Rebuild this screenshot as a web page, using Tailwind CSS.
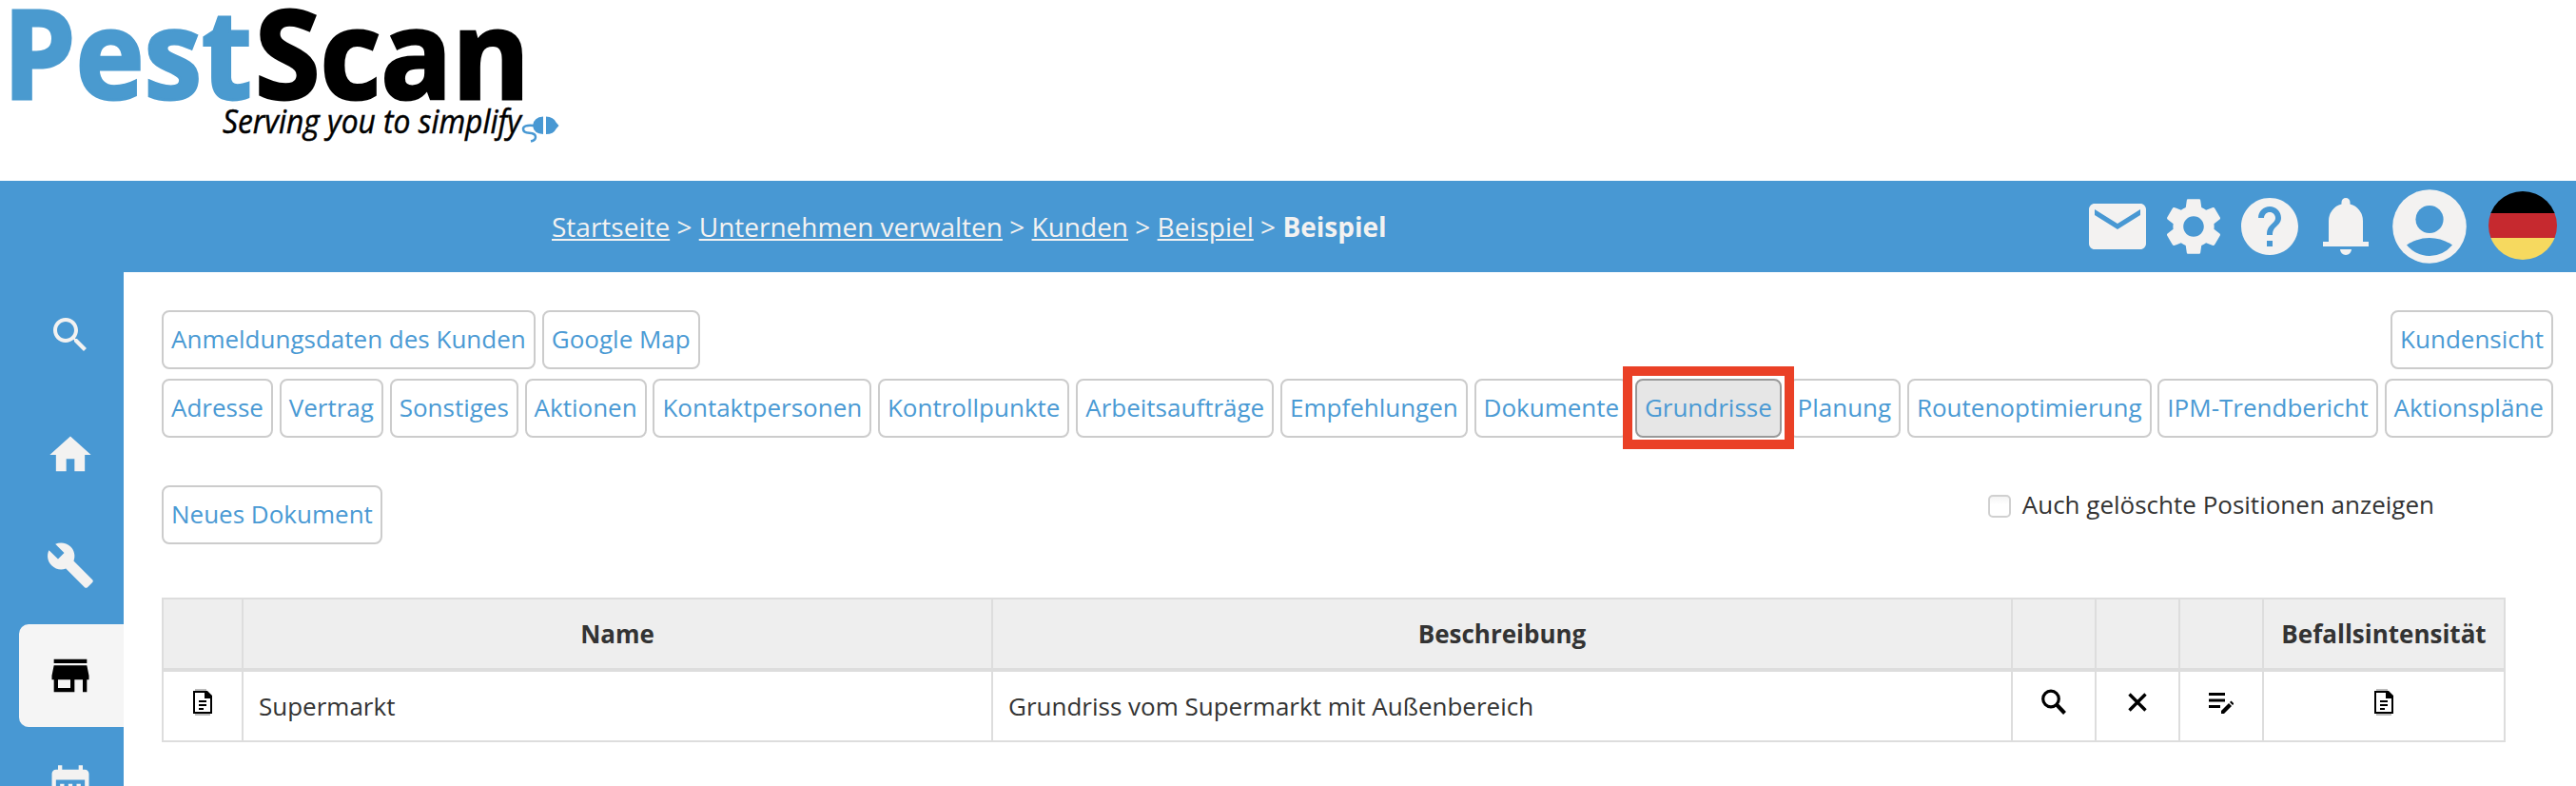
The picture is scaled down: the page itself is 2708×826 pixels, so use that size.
<!DOCTYPE html>
<html lang="de">
<head>
    <meta charset="UTF-8">
    <meta name="viewport" content="width=device-width, initial-scale=1.0">
    <title>PestScan - Grundrisse</title>
    <script src="https://cdn.jsdelivr.net/npm/@tailwindcss/browser@4"></script>
</head>
<body class="bg-white font-['Open_Sans',sans-serif] text-[26px] text-[#333] h-[826px] overflow-hidden flex flex-col">
    <!-- Logo -->
    <div class="h-[190px] shrink-0">
        <svg class="block" width="620" height="190" viewBox="0 0 620 190">
            <g font-family="Open Sans, sans-serif" font-weight="700" font-size="130" stroke-width="3">
                <text x="3" y="103.500" fill="#4a9acf" stroke="#4a9acf" textLength="262" lengthAdjust="spacingAndGlyphs">Pest</text>
                <text x="268" y="103.500" fill="#000" stroke="#000" textLength="289" lengthAdjust="spacingAndGlyphs">Scan</text>
            </g>
            <text x="234" y="140" font-family="Open Sans, sans-serif" font-style="italic" font-weight="500" font-size="34" fill="#000" stroke="#000" stroke-width="0.500" textLength="314" lengthAdjust="spacingAndGlyphs">Serving you to simplify</text>
            <g fill="#4898d3">
                <path d="M571 122.500v18.500q-10-.5-11-9q1-9 11-9.500z"/>
                <path d="M574 122.500q8 .5 10.500 6l3 3.500l-3 3.500q-2.500 5.500-10.500 5.500z"/>
                <path d="M561 132q-11-1-11 3.500q0 4 6.500 4.200q6.500.3 6.500 4.300q0 3.500-5 4.500" fill="none" stroke="#4898d3" stroke-width="2.500"/>
            </g>
        </svg>
    </div>

    <!-- Kopfzeile -->
    <header class="h-24 shrink-0 bg-[#4898d3] text-[#f3f2f1] flex items-center justify-between pl-[580px] pr-5">
        <nav class="text-[28px] leading-[38px] whitespace-nowrap">
            <a class="underline" href="#">Startseite</a> &gt;
            <a class="underline" href="#">Unternehmen verwalten</a> &gt;
            <a class="underline" href="#">Kunden</a> &gt;
            <a class="underline" href="#">Beispiel</a> &gt;
            <b>Beispiel</b>
        </nav>
        <div class="flex items-center gap-2">
            <svg class="size-[72px]" viewBox="0 0 24 24" fill="currentColor"><path d="M20 4H4c-1.100 0-2 .9-2 2v12c0 1.100.9 2 2 2h16c1.100 0 2-.9 2-2V6c0-1.100-.9-2-2-2zm0 4l-8 5-8-5V6l8 5 8-5v2z"/></svg>
            <svg class="size-[72px]" viewBox="0 0 24 24" fill="currentColor"><path d="M19.140 12.940c.04-.3.06-.61.06-.94 0-.32-.02-.64-.07-.94l2.030-1.580c.18-.14.23-.41.12-.61l-1.920-3.320c-.12-.22-.37-.29-.59-.22l-2.390.96c-.5-.38-1.030-.7-1.620-.94l-.36-2.540c-.04-.24-.24-.41-.48-.41h-3.840c-.24 0-.43.17-.47.41l-.36 2.540c-.59.24-1.130.57-1.620.94l-2.390-.96c-.22-.08-.47 0-.59.22L2.740 8.870c-.12.21-.08.47.12.61l2.030 1.580c-.05.3-.09.63-.09.94s.02.64.07.94l-2.030 1.580c-.18.14-.23.41-.12.61l1.920 3.320c.12.22.37.29.59.22l2.390-.96c.5.38 1.030.7 1.620.94l.36 2.540c.05.24.24.41.48.41h3.840c.24 0 .44-.17.47-.41l.36-2.540c.59-.24 1.130-.56 1.620-.94l2.390.96c.22.08.47 0 .59-.22l1.920-3.320c.12-.22.07-.47-.12-.61l-2.010-1.580zM12 15.600c-1.980 0-3.600-1.620-3.600-3.600s1.620-3.600 3.600-3.600 3.600 1.620 3.600 3.600-1.620 3.600-3.600 3.600z"/></svg>
            <svg class="size-[72px]" viewBox="0 0 24 24" fill="currentColor"><path d="M12 2C6.480 2 2 6.480 2 12s4.480 10 10 10 10-4.480 10-10S17.520 2 12 2zm1 17h-2v-2h2v2zm2.070-7.750l-.9.920C13.450 12.900 13 13.500 13 15h-2v-.5c0-1.100.45-2.100 1.170-2.830l1.240-1.260c.37-.36.59-.86.59-1.410 0-1.100-.9-2-2-2s-2 .9-2 2H8c0-2.210 1.790-4 4-4s4 1.790 4 4c0 .88-.36 1.680-.93 2.250z"/></svg>
            <svg class="size-[72px]" viewBox="0 0 24 24" fill="currentColor"><path d="M4 19v-1.700h2V10q0-2.075 1.250-3.687Q8.500 4.700 10.500 4.200v-.7q0-.625.438-1.062Q11.375 2 12 2t1.063.438q.437.437.437 1.062v.7q2 .5 3.250 2.113Q18 7.925 18 10v7.300h2V19Zm8 3q-.825 0-1.412-.587Q10 20.825 10 20h4q0 .825-.587 1.413Q12.825 22 12 22Z"/></svg>
            <svg class="w-[78px] h-[78px] ml-[5px]" viewBox="-39 -39 78 78" fill="currentColor"><circle r="38.800"/><circle cy="-7.500" r="14.600" fill="#4898d3"/><path d="M-24 19.500Q-13 12 0 12T24 19.500Q14 31 0 31T-24 19.500z" fill="#4898d3"/></svg>
            <div class="size-[72px] rounded-full overflow-hidden ml-[15px] mb-0.5">
                <div class="h-[23px] bg-black"></div>
                <div class="h-[26px] bg-[#c6292f]"></div>
                <div class="h-[23px] bg-[#f6d95f]"></div>
            </div>
        </div>
    </header>

    <div class="flex grow min-h-0">
        <!-- Seitenleiste -->
        <aside class="w-[130px] shrink-0 bg-[#4898d3] text-[#f3f2f1] pl-5 pt-3 flex flex-col gap-2 overflow-hidden">
            <a href="#" class="h-[108px] mb-2.5 shrink-0 flex items-center justify-center pr-0.5">
                <svg class="size-12" viewBox="0 0 24 24" fill="currentColor"><path d="M15.500 14h-.79l-.28-.27C15.410 12.590 16 11.110 16 9.500 16 5.910 13.090 3 9.500 3S3 5.910 3 9.500 5.910 16 9.500 16c1.610 0 3.090-.59 4.230-1.570l.27.28v.79l5 4.990L20.490 19l-4.990-5zm-6 0C7.010 14 5 11.990 5 9.500S7.010 5 9.500 5 14 7.010 14 9.500 11.990 14 9.500 14z"/></svg>
            </a>
            <a href="#" class="h-[108px] shrink-0 flex items-center justify-center pr-0.5">
                <svg class="size-[52px]" viewBox="0 0 24 24" fill="currentColor"><path d="M10 20v-6h4v6h5v-8h3L12 3 2 12h3v8z"/></svg>
            </a>
            <a href="#" class="h-[108px] shrink-0 flex items-center justify-center pr-0.5">
                <svg class="size-[52px]" viewBox="0 0 24 24" fill="currentColor"><path d="M22.700 19l-9.100-9.100c.9-2.300.4-5-1.500-6.900-2-2-5-2.400-7.400-1.300L9 6 6 9 1.600 4.700C.4 7.100.9 10.100 2.900 12.100c1.900 1.900 4.600 2.400 6.900 1.500l9.100 9.100c.4.4 1 .4 1.400 0l2.300-2.300c.5-.4.5-1.100.1-1.400z"/></svg>
            </a>
            <a href="#" class="h-[108px] shrink-0 flex items-center justify-center pr-0.5 bg-[#f5f5f5] text-black rounded-l-[10px]">
                <svg class="size-[52px]" viewBox="0 0 24 24" fill="currentColor"><path d="M20 4H4v2h16V4zm1 10v-2l-1-5H4l-1 5v2h1v6h10v-6h4v6h2v-6h1zm-9 4H6v-4h6v4z"/></svg>
            </a>
            <a href="#" class="h-[108px] shrink-0 flex items-center justify-center pr-0.5">
                <svg class="size-[52px]" viewBox="0 0 24 24" fill="currentColor"><path d="M9 11H7v2h2v-2zm4 0h-2v2h2v-2zm4 0h-2v2h2v-2zm2-7h-1V2h-2v2H8V2H6v2H5c-1.110 0-1.990.9-1.990 2L3 20c0 1.100.89 2 2 2h14c1.100 0 2-.9 2-2V6c0-1.100-.9-2-2-2zm0 16H5V9h14v11z"/></svg>
            </a>
        </aside>

        <!-- Inhalt -->
        <main class="grow min-w-0 pt-10 pl-10 pr-6 whitespace-nowrap">
            <div class="flex gap-[7px] text-[#4a9ad4]">
                <a href="#" class="h-[62px] px-2 pb-0.5 border-2 border-[#ccc] rounded-lg flex items-center">Anmeldungsdaten des Kunden</a>
                <a href="#" class="h-[62px] px-2 pb-0.5 border-2 border-[#ccc] rounded-lg flex items-center">Google Map</a>
                <a href="#" class="h-[62px] px-2 pb-0.5 border-2 border-[#ccc] rounded-lg flex items-center ml-auto">Kundensicht</a>
            </div>
            <div class="mt-2.5 flex justify-between text-[#4a9ad4]">
                <a href="#" class="h-[62px] px-2 pb-0.5 border-2 border-[#ccc] rounded-lg flex items-center">Adresse</a>
                <a href="#" class="h-[62px] px-2 pb-0.5 border-2 border-[#ccc] rounded-lg flex items-center">Vertrag</a>
                <a href="#" class="h-[62px] px-2 pb-0.5 border-2 border-[#ccc] rounded-lg flex items-center">Sonstiges</a>
                <a href="#" class="h-[62px] px-2 pb-0.5 border-2 border-[#ccc] rounded-lg flex items-center">Aktionen</a>
                <a href="#" class="h-[62px] px-2 pb-0.5 border-2 border-[#ccc] rounded-lg flex items-center">Kontaktpersonen</a>
                <a href="#" class="h-[62px] px-2 pb-0.5 border-2 border-[#ccc] rounded-lg flex items-center">Kontrollpunkte</a>
                <a href="#" class="h-[62px] px-2 pb-0.5 border-2 border-[#ccc] rounded-lg flex items-center">Arbeitsaufträge</a>
                <a href="#" class="h-[62px] px-2 pb-0.5 border-2 border-[#ccc] rounded-lg flex items-center">Empfehlungen</a>
                <a href="#" class="h-[62px] px-2 pb-0.5 border-2 border-[#ccc] rounded-lg flex items-center">Dokumente</a>
                <div class="relative">
                    <a href="#" class="h-[62px] px-2 pb-0.5 border-2 border-[#999] bg-[#e6e6e6] rounded-lg flex items-center">Grundrisse</a>
                    <!-- rote Markierung -->
                    <div class="absolute z-10 -inset-x-[13px] -top-[13px] -bottom-3 border-10 border-[#ea4026]"></div>
                </div>
                <a href="#" class="h-[62px] px-2 pb-0.5 border-2 border-[#ccc] rounded-lg flex items-center">Planung</a>
                <a href="#" class="h-[62px] px-2 pb-0.5 border-2 border-[#ccc] rounded-lg flex items-center">Routenoptimierung</a>
                <a href="#" class="h-[62px] px-2 pb-0.5 border-2 border-[#ccc] rounded-lg flex items-center">IPM-Trendbericht</a>
                <a href="#" class="h-[62px] px-2 pb-0.5 border-2 border-[#ccc] rounded-lg flex items-center">Aktionspläne</a>
            </div>

            <div class="mt-[50px] flex items-start justify-between pr-[125px]">
                <a href="#" class="h-[62px] px-2 pb-0.5 border-2 border-[#ccc] rounded-lg flex items-center text-[#4a9ad4]">Neues Dokument</a>
                <label class="flex items-center gap-3 h-11">
                    <input type="checkbox" class="appearance-none size-6 rounded-[5px] border-2 border-[#d0d0d0] bg-linear-to-b from-[#f4f4f4] to-white to-40%">
                    <span class="-mt-1">Auch gelöschte Positionen anzeigen</span>
                </label>
            </div>

            <table class="mt-14 w-[2464px] table-fixed border-separate border-spacing-0 border-2 border-[#ddd]">
                <colgroup>
                    <col class="w-[84px]"><col class="w-[788px]"><col class="w-[1072px]"><col class="w-[88px]"><col class="w-[88px]"><col class="w-[88px]"><col class="w-[252px]">
                </colgroup>
                <thead>
                    <tr class="h-[76px] bg-[#eee] font-bold">
                        <th class="p-0 border-r-2 border-b-4 border-[#ddd]"></th>
                        <th class="p-0 border-r-2 border-b-4 border-[#ddd]">Name</th>
                        <th class="p-0 border-r-2 border-b-4 border-[#ddd]">Beschreibung</th>
                        <th class="p-0 border-r-2 border-b-4 border-[#ddd]"></th>
                        <th class="p-0 border-r-2 border-b-4 border-[#ddd]"></th>
                        <th class="p-0 border-r-2 border-b-4 border-[#ddd]"></th>
                        <th class="p-0 border-b-4 border-[#ddd]">Befallsintensität</th>
                    </tr>
                </thead>
                <tbody>
                    <tr class="h-[72px] text-black">
                        <td class="p-0 pb-2 border-r-2 border-[#ddd]">
                            <svg class="mx-auto" width="20" height="28" viewBox="0 0 20 28"><path d="M2 1h12M2 27h16" stroke="#bbb" stroke-width="2"/><path d="M1 3h12l6 6v16H1z" fill="#fff" stroke="#000" stroke-width="2"/><path d="M12 2h3l5 5v3h-8z"/><path d="M6 13h8M6 17h8M6 21h5" stroke="#000" stroke-width="2"/></svg>
                        </td>
                        <td class="p-0 pl-4 border-r-2 border-[#ddd] text-[#333]">Supermarkt</td>
                        <td class="p-0 pl-4 border-r-2 border-[#ddd] text-[#333]">Grundriss vom Supermarkt mit Außenbereich</td>
                        <td class="p-0 pb-2 border-r-2 border-[#ddd]">
                            <svg class="mx-auto" width="26" height="28" viewBox="0 0 26 28" fill="none" stroke="#000"><circle cx="10" cy="10.500" r="8.300" stroke-width="3.200"/><path d="M15.500 16l9 9.500" stroke-width="4"/></svg>
                        </td>
                        <td class="p-0 pb-2 border-r-2 border-[#ddd]">
                            <svg class="mx-auto" width="20" height="20" viewBox="0 0 20 20" fill="none" stroke="#000" stroke-width="3.400"><path d="M1.500 1.500l17 17M18.500 1.500l-17 17"/></svg>
                        </td>
                        <td class="p-0 pb-1.5 border-r-2 border-[#ddd]">
                            <svg class="mx-auto" width="26" height="24" viewBox="0 0 26 24"><path d="M0 2.500h17M0 9h17M0 15.500h12" stroke="#000" stroke-width="3"/><path d="M13 20l8-8 3 3-8 8h-3z"/><path d="M22 11l1.500-1.500 3 3L25 14z"/></svg>
                        </td>
                        <td class="p-0 pb-2">
                            <svg class="mx-auto" width="20" height="28" viewBox="0 0 20 28"><path d="M2 1h12M2 27h16" stroke="#bbb" stroke-width="2"/><path d="M1 3h12l6 6v16H1z" fill="#fff" stroke="#000" stroke-width="2"/><path d="M12 2h3l5 5v3h-8z"/><path d="M6 13h8M6 17h8M6 21h5" stroke="#000" stroke-width="2"/></svg>
                        </td>
                    </tr>
                </tbody>
            </table>
        </main>
    </div>
</body>
</html>
